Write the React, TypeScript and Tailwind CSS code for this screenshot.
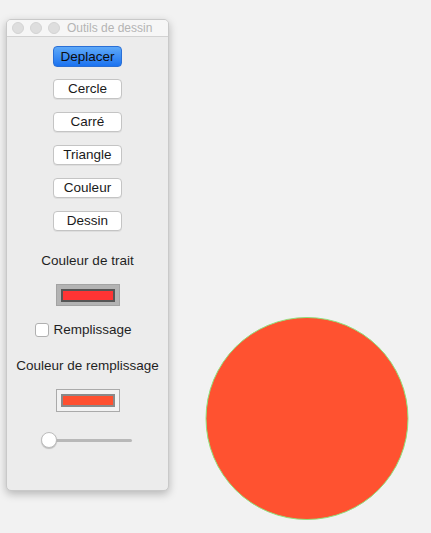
import React from "react";

const tools = ["Cercle", "Carré", "Triangle", "Couleur", "Dessin"];

const ToolButton: React.FC<{ label: string; active?: boolean }> = ({ label, active }) => (
  <button
    className={
      active
        ? "h-[21px] w-[69px] rounded-[4px] border border-[#2a6fd6] bg-gradient-to-b from-[#5ea9f8] to-[#1a72f0] text-[13.5px] leading-none text-[#0d0d0d]"
        : "h-[20px] w-[69px] rounded-[4px] border border-[#c4c4c4] bg-white text-[13.5px] leading-none text-[#1a1a1a] shadow-[0_1px_0_rgba(0,0,0,0.06)]"
    }
  >
    {label}
  </button>
);

const App: React.FC = () => {
  return (
    <main className="flex h-[533px] w-[431px] bg-[#f2f2f2] font-['Liberation_Sans',Arial,sans-serif]">
      <div className="ml-[6px] mt-[19px] flex h-[472px] w-[163px] flex-col items-center overflow-hidden rounded-[5px] border border-[#c9c9c9] bg-[#ececec] shadow-[0_3px_8px_rgba(0,0,0,0.25)]">
        <div className="relative flex h-[17px] w-full items-center border-b border-[#d2d2d2] bg-[#f6f6f6]">
          <div className="ml-[5px] flex gap-[6px]">
            <span className="h-[12px] w-[12px] rounded-full border border-[#d3d3d3] bg-[#dedede]" />
            <span className="h-[12px] w-[12px] rounded-full border border-[#d3d3d3] bg-[#dedede]" />
            <span className="h-[12px] w-[12px] rounded-full border border-[#d3d3d3] bg-[#dedede]" />
          </div>
          <span className="ml-[7px] text-[12px] leading-none text-[#b4b4b4]">Outils de dessin</span>
        </div>

        <div className="mt-[9px] flex flex-col items-center">
          <ToolButton label="Deplacer" active />
          <div className="mt-[12px] flex flex-col items-center gap-[13px]">
            {tools.map((t) => (
              <ToolButton key={t} label={t} />
            ))}
          </div>
        </div>

        <p className="mt-[22px] text-[13.5px] leading-[16px] text-[#1f1f1f]">Couleur de trait</p>
        <div className="mt-[15px] flex h-[22px] w-[64px] items-center justify-center border border-[#a3a3a3] bg-[#b3b3b3]">
          <div className="h-[13px] w-[54px] border-2 border-[#555] bg-[#ff3434]" />
        </div>

        <label className="mr-[8px] mt-[16px] flex items-center gap-[4px] text-[13.5px] leading-[16px] text-[#1f1f1f]">
          <span className="h-[14px] w-[14px] rounded-[3px] border border-[#b0b0b0] bg-white" />
          Remplissage
        </label>

        <p className="mt-[20px] text-[13.5px] leading-[16px] text-[#1f1f1f]">Couleur de remplissage</p>
        <div className="mt-[15px] flex h-[23px] w-[64px] items-center justify-center border border-[#aaaaaa] bg-[#f2f2f2]">
          <div className="h-[13px] w-[54px] border-2 border-[#8a8a8a] bg-[#ff5030]" />
        </div>

        <div className="relative ml-[-2px] mt-[20px] flex h-[16px] w-[91px] items-center">
          <div className="ml-[8px] h-[3px] w-[83px] rounded-full bg-[#b8b8b8]" />
          <span className="absolute left-0 top-0 h-[16px] w-[16px] rounded-full border border-[#bdbdbd] bg-white shadow-[0_1px_1px_rgba(0,0,0,0.2)]" />
        </div>
      </div>

      <div className="flex-1">
        <svg width="262" height="533" viewBox="169 0 262 533">
          <circle cx="307" cy="418.5" r="101" fill="#ff5230" stroke="#8fe07a" strokeWidth="1" />
        </svg>
      </div>
    </main>
  );
};

export default App;
